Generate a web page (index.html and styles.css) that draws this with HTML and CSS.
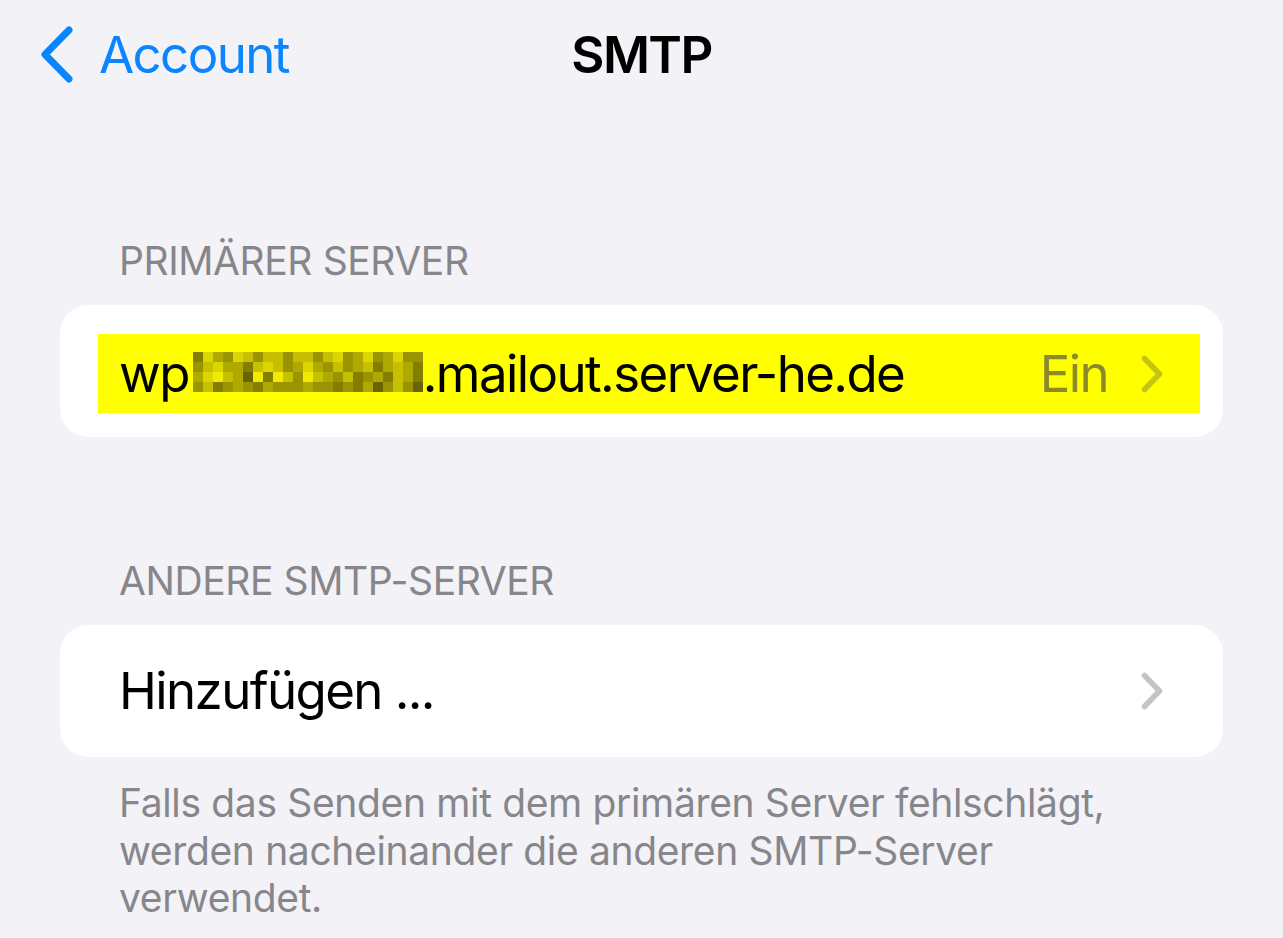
FILE: index.html
```html
<!DOCTYPE html>
<html lang="de">
<head>
    <meta charset="UTF-8">
    <title>SMTP</title>
    <link rel="stylesheet" href="styles.css">
</head>
<body>

    <div class="nav">
        <a class="back" href="#">
            <svg class="back_icon" width="34" height="58" viewBox="0 0 34 58">
                <path d="M29 4 L5 28.5 L29 53" fill="none" stroke="#0a84ff" stroke-width="7" stroke-linecap="round" stroke-linejoin="round"/>
            </svg>
            <span>Account</span>
        </a>
        <div class="title">SMTP</div>
        <div></div>
    </div>

    <div class="section first">
        <div class="section_header">PRIMÄRER SERVER</div>
        <div class="card marked">
            <div class="row highlight">
                <span class="label">wp<svg class="blur" width="230" height="40" viewBox="0 0 230 40" shape-rendering="crispEdges">
                    <g>
                        <rect x="0" y="0" width="10" height="10" fill="#847e00"/><rect x="10" y="0" width="10" height="10" fill="#dcd600"/><rect x="20" y="0" width="10" height="10" fill="#b0aa00"/><rect x="30" y="0" width="10" height="10" fill="#9a9400"/><rect x="40" y="0" width="10" height="10" fill="#dcd600"/><rect x="50" y="0" width="10" height="10" fill="#c6c000"/><rect x="60" y="0" width="10" height="10" fill="#9a9400"/><rect x="70" y="0" width="10" height="10" fill="#c6c000"/><rect x="80" y="0" width="10" height="10" fill="#c6c000"/><rect x="90" y="0" width="10" height="10" fill="#9a9400"/><rect x="100" y="0" width="10" height="10" fill="#c6c000"/><rect x="110" y="0" width="10" height="10" fill="#c6c000"/><rect x="120" y="0" width="10" height="10" fill="#9a9400"/><rect x="130" y="0" width="10" height="10" fill="#c6c000"/><rect x="140" y="0" width="10" height="10" fill="#dcd600"/><rect x="150" y="0" width="10" height="10" fill="#9a9400"/><rect x="160" y="0" width="10" height="10" fill="#b0aa00"/><rect x="170" y="0" width="10" height="10" fill="#dcd600"/><rect x="180" y="0" width="10" height="10" fill="#9a9400"/><rect x="190" y="0" width="10" height="10" fill="#b0aa00"/><rect x="200" y="0" width="10" height="10" fill="#dcd600"/><rect x="210" y="0" width="10" height="10" fill="#9a9400"/><rect x="220" y="0" width="10" height="10" fill="#9a9400"/>
                    </g>
                    <g>
                        <rect x="0" y="10" width="10" height="10" fill="#9a9400"/><rect x="10" y="10" width="10" height="10" fill="#c6c000"/><rect x="20" y="10" width="10" height="10" fill="#dcd600"/><rect x="30" y="10" width="10" height="10" fill="#b0aa00"/><rect x="40" y="10" width="10" height="10" fill="#b0aa00"/><rect x="50" y="10" width="10" height="10" fill="#847e00"/><rect x="60" y="10" width="10" height="10" fill="#c6c000"/><rect x="70" y="10" width="10" height="10" fill="#dcd600"/><rect x="80" y="10" width="10" height="10" fill="#c6c000"/><rect x="90" y="10" width="10" height="10" fill="#9a9400"/><rect x="100" y="10" width="10" height="10" fill="#b0aa00"/><rect x="110" y="10" width="10" height="10" fill="#dcd600"/><rect x="120" y="10" width="10" height="10" fill="#b0aa00"/><rect x="130" y="10" width="10" height="10" fill="#9a9400"/><rect x="140" y="10" width="10" height="10" fill="#c6c000"/><rect x="150" y="10" width="10" height="10" fill="#9a9400"/><rect x="160" y="10" width="10" height="10" fill="#b0aa00"/><rect x="170" y="10" width="10" height="10" fill="#c6c000"/><rect x="180" y="10" width="10" height="10" fill="#847e00"/><rect x="190" y="10" width="10" height="10" fill="#b0aa00"/><rect x="200" y="10" width="10" height="10" fill="#c6c000"/><rect x="210" y="10" width="10" height="10" fill="#b0aa00"/><rect x="220" y="10" width="10" height="10" fill="#847e00"/>
                    </g>
                    <g>
                        <rect x="0" y="20" width="10" height="10" fill="#b0aa00"/><rect x="10" y="20" width="10" height="10" fill="#dcd600"/><rect x="20" y="20" width="10" height="10" fill="#f0ea00"/><rect x="30" y="20" width="10" height="10" fill="#c6c000"/><rect x="40" y="20" width="10" height="10" fill="#b0aa00"/><rect x="50" y="20" width="10" height="10" fill="#6a6400"/><rect x="60" y="20" width="10" height="10" fill="#f0ea00"/><rect x="70" y="20" width="10" height="10" fill="#847e00"/><rect x="80" y="20" width="10" height="10" fill="#f0ea00"/><rect x="90" y="20" width="10" height="10" fill="#c6c000"/><rect x="100" y="20" width="10" height="10" fill="#9a9400"/><rect x="110" y="20" width="10" height="10" fill="#f0ea00"/><rect x="120" y="20" width="10" height="10" fill="#c6c000"/><rect x="130" y="20" width="10" height="10" fill="#b0aa00"/><rect x="140" y="20" width="10" height="10" fill="#9a9400"/><rect x="150" y="20" width="10" height="10" fill="#c6c000"/><rect x="160" y="20" width="10" height="10" fill="#847e00"/><rect x="170" y="20" width="10" height="10" fill="#9a9400"/><rect x="180" y="20" width="10" height="10" fill="#b0aa00"/><rect x="190" y="20" width="10" height="10" fill="#847e00"/><rect x="200" y="20" width="10" height="10" fill="#c6c000"/><rect x="210" y="20" width="10" height="10" fill="#b0aa00"/><rect x="220" y="20" width="10" height="10" fill="#847e00"/>
                    </g>
                    <g>
                        <rect x="0" y="30" width="10" height="10" fill="#9a9400"/><rect x="10" y="30" width="10" height="10" fill="#c6c000"/><rect x="20" y="30" width="10" height="10" fill="#847e00"/><rect x="30" y="30" width="10" height="10" fill="#9a9400"/><rect x="40" y="30" width="10" height="10" fill="#b0aa00"/><rect x="50" y="30" width="10" height="10" fill="#9a9400"/><rect x="60" y="30" width="10" height="10" fill="#847e00"/><rect x="70" y="30" width="10" height="10" fill="#b0aa00"/><rect x="80" y="30" width="10" height="10" fill="#9a9400"/><rect x="90" y="30" width="10" height="10" fill="#9a9400"/><rect x="100" y="30" width="10" height="10" fill="#9a9400"/><rect x="110" y="30" width="10" height="10" fill="#b0aa00"/><rect x="120" y="30" width="10" height="10" fill="#9a9400"/><rect x="130" y="30" width="10" height="10" fill="#9a9400"/><rect x="140" y="30" width="10" height="10" fill="#847e00"/><rect x="150" y="30" width="10" height="10" fill="#9a9400"/><rect x="160" y="30" width="10" height="10" fill="#847e00"/><rect x="170" y="30" width="10" height="10" fill="#b0aa00"/><rect x="180" y="30" width="10" height="10" fill="#6a6400"/><rect x="190" y="30" width="10" height="10" fill="#9a9400"/><rect x="200" y="30" width="10" height="10" fill="#c6c000"/><rect x="210" y="30" width="10" height="10" fill="#9a9400"/><rect x="220" y="30" width="10" height="10" fill="#6a6400"/>
                    </g>
                </svg>.mailout.server-he.de</span>
                <span class="detail">Ein</span>
                <svg class="chevron" width="22" height="38" viewBox="0 0 22 38">
                    <path d="M3.5 3.5 L18.5 19 L3.5 34.5" fill="none" stroke="currentColor" stroke-width="5.5" stroke-linecap="round" stroke-linejoin="round"/>
                </svg>
            </div>
        </div>
    </div>

    <div class="section second">
        <div class="section_header">ANDERE SMTP-SERVER</div>
        <div class="card">
            <div class="row">
                <span class="label">Hinzufügen ...</span>
                <svg class="chevron" width="22" height="38" viewBox="0 0 22 38">
                    <path d="M3.5 3.5 L18.5 19 L3.5 34.5" fill="none" stroke="currentColor" stroke-width="5.5" stroke-linecap="round" stroke-linejoin="round"/>
                </svg>
            </div>
        </div>
        <p class="section_footer">Falls das Senden mit dem primären Server fehlschlägt, werden nacheinander die anderen SMTP-Server verwendet.</p>
    </div>

</body>
</html>
```

FILE: styles.css
```css
body {
    margin: 0;
    background: #f2f2f7;
    font-family: 'Inter', 'Liberation Sans', sans-serif;
    color: #000;
}

.nav {
    display: grid;
    grid-template-columns: 1fr auto 1fr;
    align-items: center;
    padding: 24px 40px 0 40px;
    height: 62px;
    line-height: 62px;
    font-size: 51px;
    letter-spacing: -1.6px;
}

.back {
    display: flex;
    align-items: center;
    gap: 25px;
    color: #0a84ff;
    text-decoration: none;
}

.back_icon {
    display: block;
}

.title {
    font-weight: 600;
    text-align: center;
}

.section {
    padding: 0 60px;
}

.section.first {
    margin-top: 151px;
}

.section.second {
    margin-top: 120px;
}

.section_header {
    padding-left: 59px;
    font-size: 39px;
    line-height: 47px;
    letter-spacing: -0.4px;
    color: #86868b;
    margin-bottom: 21px;
}

.card {
    background: #fff;
    border-radius: 28px;
    height: 132px;
    display: flex;
    flex-direction: column;
    justify-content: center;
    padding: 0 60px 0 59px;
    box-sizing: border-box;
}

.card.marked {
    padding: 29px 23px 24px 38px;
}

.row {
    display: flex;
    align-items: center;
    font-size: 51px;
    line-height: 62px;
    letter-spacing: -1.6px;
}

.row.highlight {
    background: #ffff00;
    height: 79px;
    padding: 0 37px 0 21px;
}

.label {
    flex: 1;
}

.blur {
    margin-left: 4px;
    vertical-align: baseline;
}

.detail {
    color: rgba(60, 60, 67, 0.6);
    margin-right: 33px;
}

.chevron {
    display: block;
    color: rgba(60, 60, 67, 0.3);
}

.section_footer {
    margin: 22px 0 0 0;
    padding: 0 60px 0 59px;
    font-size: 39px;
    line-height: 47.5px;
    letter-spacing: -0.35px;
    color: #86868b;
}
```
